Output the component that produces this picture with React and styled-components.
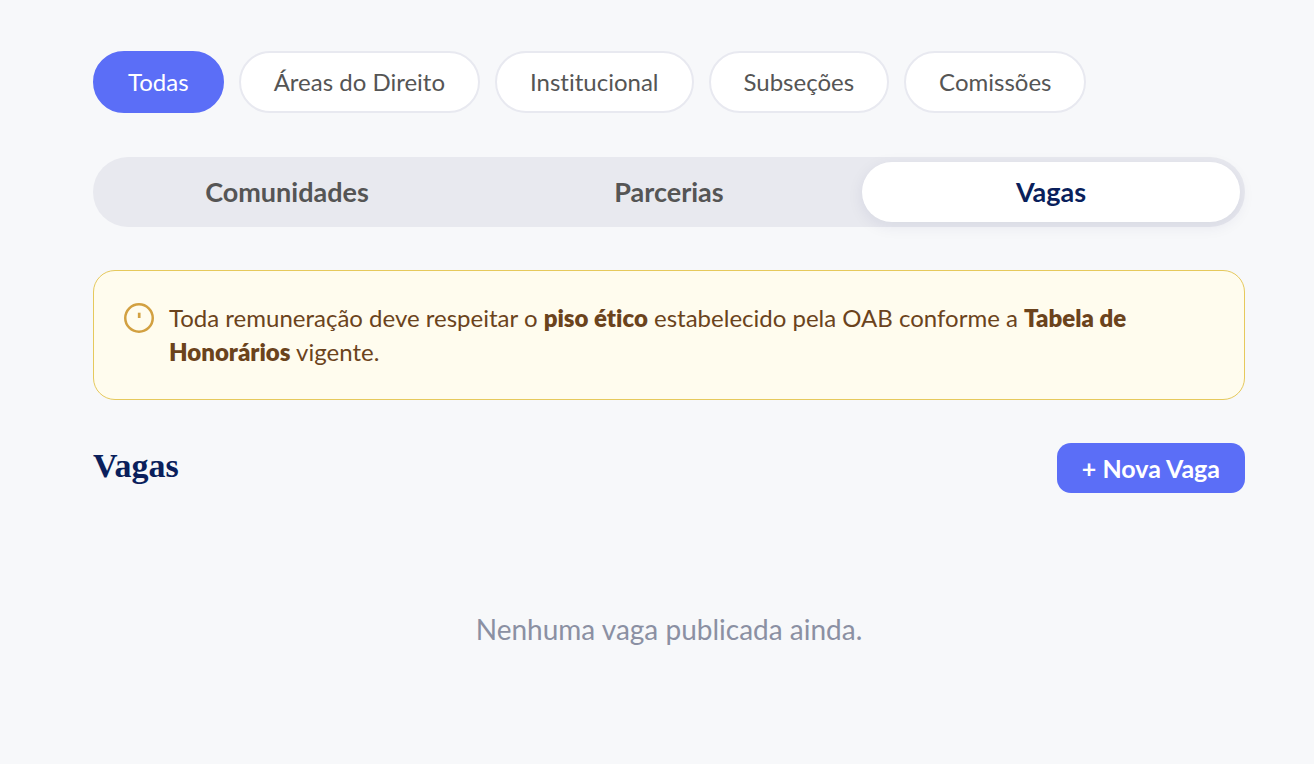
import React, { useState } from "react";
import styled, { createGlobalStyle } from "styled-components";

const GlobalStyle = createGlobalStyle`
  * { box-sizing: border-box; }
  body {
    margin: 0;
    background: #f7f8fa;
    color: #555555;
    font-family: Lato, "Liberation Sans", sans-serif;
    font-variant-ligatures: none;
  }
  button { font-family: inherit; border: 0; cursor: pointer; }
`;

const Page = styled.main`
  padding: 51px 69px 116px 93px;
`;

const Filters = styled.nav`
  display: flex;
  flex-wrap: wrap;
  gap: 15px;
  margin-bottom: 44px;
`;

const Pill = styled.button`
  height: 62px;
  padding: 0 33px;
  border: 2px solid ${(p) => (p.$active ? "#5b6ef7" : "#e8e9f0")};
  border-radius: 31px;
  background: ${(p) => (p.$active ? "#5b6ef7" : "#ffffff")};
  color: ${(p) => (p.$active ? "#ffffff" : "#555555")};
  font-size: 24px;
  line-height: 30px;
  font-variant-ligatures: none;
`;

const Segments = styled.div`
  display: grid;
  grid-template-columns: repeat(3, 1fr);
  gap: 4px;
  padding: 5px;
  border-radius: 35px;
  background: #e8e9ef;
  margin-bottom: 43px;
`;

const Segment = styled.button`
  height: 60px;
  padding: 0 6px 2px;
  border-radius: 30px;
  background: ${(p) => (p.$active ? "#ffffff" : "transparent")};
  box-shadow: ${(p) => (p.$active ? "0 4px 16px rgba(10, 31, 92, 0.08)" : "none")};
  color: ${(p) => (p.$active ? "#0a1f5c" : "#555555")};
  font-size: 27px;
  font-weight: 700;
`;

const Notice = styled.aside`
  display: flex;
  align-items: flex-start;
  gap: 15px;
  padding: 30px;
  border: 1px solid #e6c95c;
  border-radius: 22px;
  background: #fffcee;
  margin-bottom: 43px;
`;

const NoticeIcon = styled.svg`
  flex: none;
  width: 30px;
  height: 30px;
  margin-top: 2px;
`;

const NoticeText = styled.p`
  margin: 0;
  color: #6b431c;
  font-size: 24px;
  line-height: 34px;
  strong { font-weight: 800; }
`;

const SectionHeader = styled.header`
  display: flex;
  align-items: flex-start;
  justify-content: space-between;
`;

const Title = styled.h2`
  margin: 0;
  color: #0a1f5c;
  font-family: "Liberation Serif", serif;
  font-size: 34px;
  line-height: 46px;
  font-weight: 700;
`;

const NewButton = styled.button`
  height: 50px;
  padding: 0 25px;
  border-radius: 14px;
  background: #5b6ef7;
  color: #ffffff;
  font-size: 25px;
  font-weight: 700;
`;

const Empty = styled.p`
  margin: 0;
  padding-top: 118px;
  color: #8b90a3;
  font-size: 28px;
  line-height: 36px;
  text-align: center;
`;

const filters = ["Todas", "Áreas do Direito", "Institucional", "Subseções", "Comissões"];
const sections = ["Comunidades", "Parcerias", "Vagas"];

export default function App() {
  const [filter, setFilter] = useState("Todas");
  const [section, setSection] = useState("Vagas");
  return (
    <Page>
      <GlobalStyle />
      <Filters>
        {filters.map((name) => (
          <Pill key={name} $active={name === filter} aria-pressed={name === filter} onClick={() => setFilter(name)}>
            {name}
          </Pill>
        ))}
      </Filters>
      <Segments>
        {sections.map((name) => (
          <Segment key={name} $active={name === section} aria-pressed={name === section} onClick={() => setSection(name)}>
            {name}
          </Segment>
        ))}
      </Segments>
      <Notice>
        <NoticeIcon viewBox="0 0 30 30" fill="none" stroke="#d2a041" aria-hidden="true">
          <circle cx="15" cy="15" r="13.75" strokeWidth="2.5" />
          <path d="M15.2 9.7v5.3" strokeWidth="2.7" />
        </NoticeIcon>
        <NoticeText>
          Toda remuneração deve respeitar o <strong>piso ético</strong> estabelecido pela OAB conforme a{" "}
          <strong>Tabela de Honorários</strong> vigente.
        </NoticeText>
      </Notice>
      <SectionHeader>
        <Title>Vagas</Title>
        <NewButton>+ Nova Vaga</NewButton>
      </SectionHeader>
      <Empty>Nenhuma vaga publicada ainda.</Empty>
    </Page>
  );
}
